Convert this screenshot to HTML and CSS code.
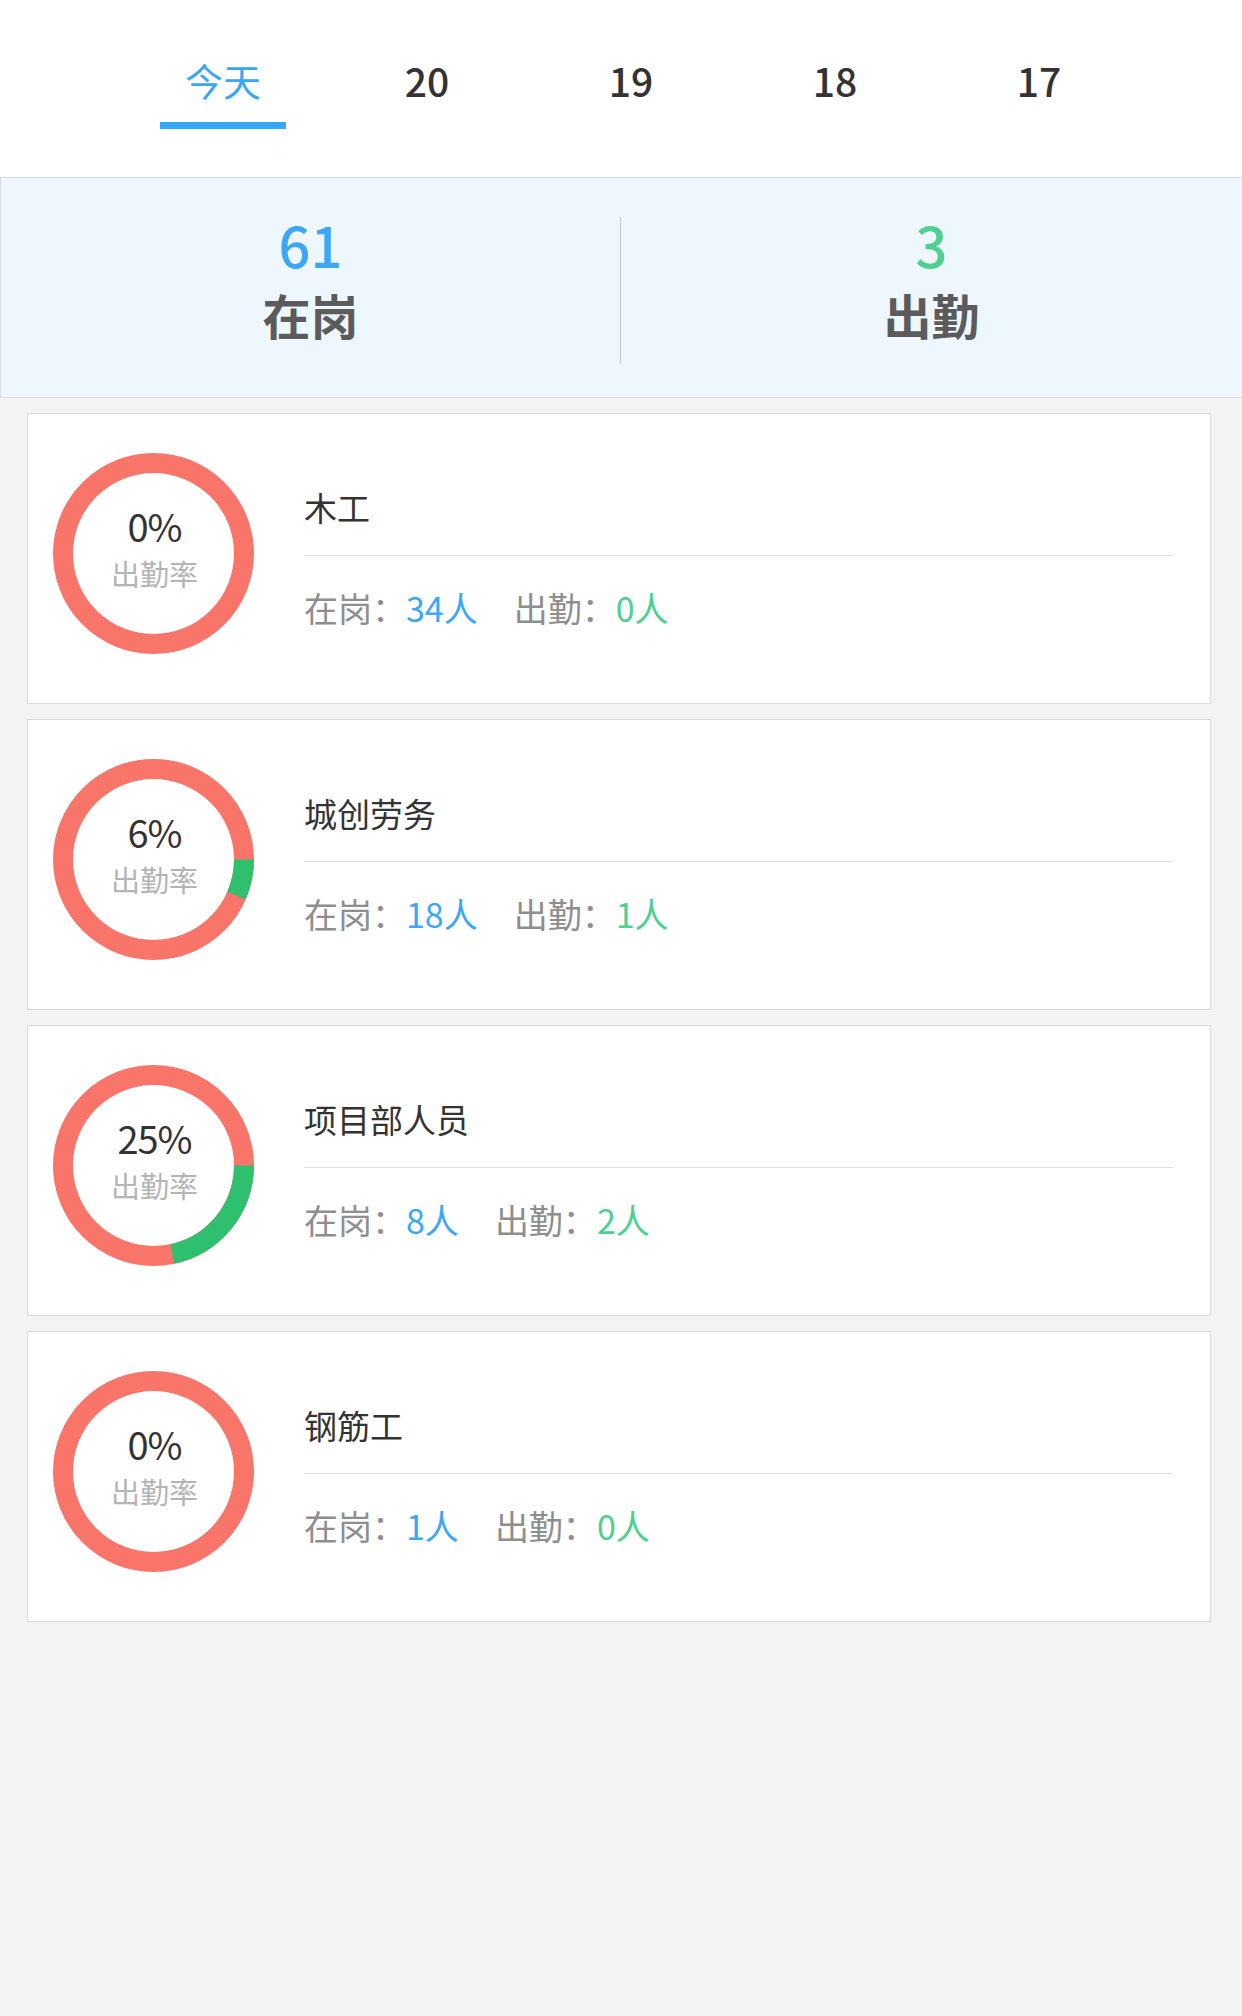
FILE: index.html
```html
<!DOCTYPE html>
<html lang="zh-CN">
<head>
<meta charset="utf-8">
<title>出勤统计</title>
<link rel="stylesheet" href="styles.css">
</head>
<body>
<div class="tabs">
  <div class="tab active"><span class="tab-label">今天</span><span class="tab-bar"></span></div>
  <div class="tab"><span class="tab-label">20</span><span class="tab-bar"></span></div>
  <div class="tab"><span class="tab-label">19</span><span class="tab-bar"></span></div>
  <div class="tab"><span class="tab-label">18</span><span class="tab-bar"></span></div>
  <div class="tab"><span class="tab-label">17</span><span class="tab-bar"></span></div>
</div>

<div class="summary">
  <div class="summary-item left">
    <div class="summary-num blue">61</div>
    <div class="summary-label">在岗</div>
  </div>
  <div class="summary-item">
    <div class="summary-num green">3</div>
    <div class="summary-label">出勤</div>
  </div>
</div>

<div class="list">
  <div class="card">
    <div class="ring">
      <svg class="ring-svg" width="201" height="201" viewBox="0 0 201 201">
        <circle class="ring-bg" cx="100.5" cy="100.5" r="90.5"></circle>
      </svg>
      <div class="ring-text">
        <div class="ring-pct">0%</div>
        <div class="ring-cap">出勤率</div>
      </div>
    </div>
    <div class="info">
      <div class="info-title">木工</div>
      <div class="info-line"></div>
      <div class="info-stats"><span class="lbl">在岗：</span><span class="val blue">34人</span><span class="lbl gap">出勤：</span><span class="val green">0人</span></div>
    </div>
  </div>

  <div class="card">
    <div class="ring">
      <svg class="ring-svg" width="201" height="201" viewBox="0 0 201 201">
        <circle class="ring-bg" cx="100.5" cy="100.5" r="90.5"></circle>
        <circle class="ring-fg" cx="100.5" cy="100.5" r="90.5" stroke-dasharray="37 600"></circle>
      </svg>
      <div class="ring-text">
        <div class="ring-pct">6%</div>
        <div class="ring-cap">出勤率</div>
      </div>
    </div>
    <div class="info">
      <div class="info-title">城创劳务</div>
      <div class="info-line"></div>
      <div class="info-stats"><span class="lbl">在岗：</span><span class="val blue">18人</span><span class="lbl gap">出勤：</span><span class="val green">1人</span></div>
    </div>
  </div>

  <div class="card">
    <div class="ring">
      <svg class="ring-svg" width="201" height="201" viewBox="0 0 201 201">
        <circle class="ring-bg" cx="100.5" cy="100.5" r="90.5"></circle>
        <circle class="ring-fg" cx="100.5" cy="100.5" r="90.5" stroke-dasharray="123 600"></circle>
      </svg>
      <div class="ring-text">
        <div class="ring-pct">25%</div>
        <div class="ring-cap">出勤率</div>
      </div>
    </div>
    <div class="info">
      <div class="info-title">项目部人员</div>
      <div class="info-line"></div>
      <div class="info-stats"><span class="lbl">在岗：</span><span class="val blue">8人</span><span class="lbl gap">出勤：</span><span class="val green">2人</span></div>
    </div>
  </div>

  <div class="card">
    <div class="ring">
      <svg class="ring-svg" width="201" height="201" viewBox="0 0 201 201">
        <circle class="ring-bg" cx="100.5" cy="100.5" r="90.5"></circle>
      </svg>
      <div class="ring-text">
        <div class="ring-pct">0%</div>
        <div class="ring-cap">出勤率</div>
      </div>
    </div>
    <div class="info">
      <div class="info-title">钢筋工</div>
      <div class="info-line"></div>
      <div class="info-stats"><span class="lbl">在岗：</span><span class="val blue">1人</span><span class="lbl gap">出勤：</span><span class="val green">0人</span></div>
    </div>
  </div>
</div>
</body>
</html>
```

FILE: styles.css
```css
* { box-sizing: border-box; }

html, body {
  margin: 0;
  padding: 0;
}

body {
  width: 1242px;
  min-height: 2016px;
  background: #f3f3f3;
  font-family: "Noto Sans CJK SC", sans-serif;
  color: #333;
}

.tabs {
  display: flex;
  height: 177px;
  background: #fff;
  padding-left: 121px;
}

.tab {
  width: 204px;
  display: flex;
  flex-direction: column;
  align-items: center;
  padding-top: 55px;
}

.tab-label {
  display: block;
  height: 50px;
  line-height: 50px;
  font-size: 39px;
  font-weight: 500;
  color: #333;
}

.tab.active .tab-label {
  font-weight: normal;
  font-size: 38px;
  color: #39a7f4;
}

.tab-bar {
  display: block;
  width: 126px;
  height: 7px;
  margin-top: 17px;
}

.tab.active .tab-bar {
  background: #33a9f6;
}

.summary {
  display: flex;
  height: 221px;
  background: #eef7fe;
  border: 1px solid #d5dbe1;
  border-right: none;
  padding: 39px 0 33px;
}

.summary-item {
  flex: 1;
  display: flex;
  flex-direction: column;
  align-items: center;
}

.summary-item.left {
  flex: 0 0 620px;
  border-right: 1px solid #c3c7cc;
}

.summary-num {
  height: 54px;
  line-height: 54px;
  font-size: 56px;
  font-weight: 500;
}

.summary-label {
  margin-top: 14px;
  height: 58px;
  line-height: 58px;
  font-size: 48px;
  font-weight: bold;
  color: #5b5b5b;
}

.blue { color: #3ca8f5; }
.green { color: #4dd090; }

.list {
  display: flex;
  flex-direction: column;
  gap: 15px;
  padding: 15px 0 0 27px;
}

.card {
  width: 1184px;
  height: 291px;
  background: #fff;
  border: 1px solid #d9d9d9;
  display: flex;
  align-items: flex-start;
  padding: 39px 0 0 25px;
}

.ring {
  width: 201px;
  height: 201px;
  display: grid;
  flex: 0 0 201px;
}

.ring-svg, .ring-text {
  grid-area: 1 / 1;
}

.ring-bg {
  fill: none;
  stroke: #f97469;
  stroke-width: 20;
}

.ring-fg {
  fill: none;
  stroke: #2fc06f;
  stroke-width: 20;
}

.ring-text {
  display: flex;
  flex-direction: column;
  align-items: center;
  padding-top: 50px;
  padding-left: 2px;
}

.ring-pct {
  height: 46px;
  line-height: 46px;
  font-size: 38px;
  color: #333;
  letter-spacing: -1px;
}

.ring-cap {
  margin-top: 4px;
  height: 40px;
  line-height: 40px;
  font-size: 29px;
  color: #b4b4b4;
}

.info {
  flex: 1;
  margin-left: 50px;
  margin-right: 37px;
  display: flex;
  flex-direction: column;
  padding-top: 29px;
}

.info-title {
  height: 50px;
  line-height: 50px;
  font-size: 33px;
  color: #333;
}

.info-line {
  margin-top: 23px;
  height: 1px;
  background: #e2e2e2;
}

.info-stats {
  margin-top: 27px;
  height: 50px;
  line-height: 50px;
  font-size: 34px;
  white-space: nowrap;
}

.lbl {
  color: #8e8e8e;
}

.lbl.gap {
  margin-left: 36px;
}
```
